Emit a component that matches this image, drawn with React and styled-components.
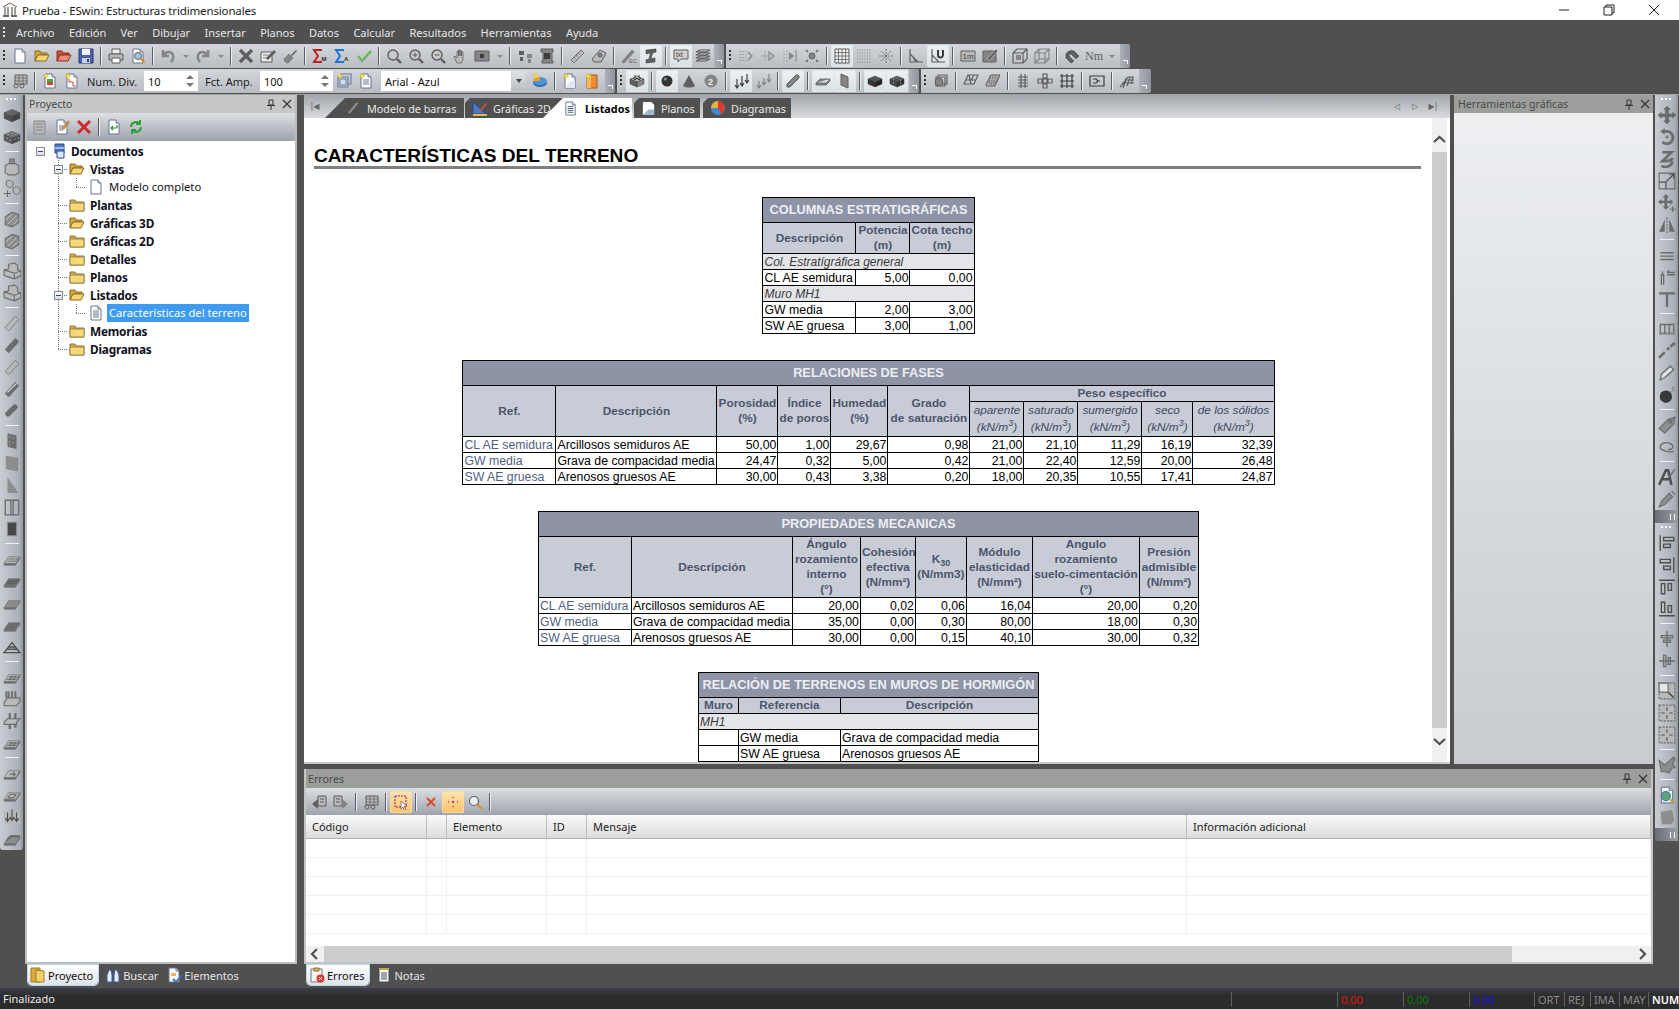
import React from 'react';
import styled, { createGlobalStyle } from 'styled-components';

const UI_FONT = '"Noto Sans", "DejaVu Sans", sans-serif';
const DOC_FONT = '"Liberation Sans", Arial, sans-serif';

const Global = createGlobalStyle`
  html, body { margin: 0; padding: 0; background: #505050; }
  body { width: 1679px; height: 1009px; overflow: hidden; font-family: ${UI_FONT}; }
  * { box-sizing: border-box; }
`;

/* ---------- icons ---------- */
const d = '#3c3c3c', s = '#5f5f5f', m = '#858585', l = '#b9b9b9', w = '#e9e9e9';

const block = (top, side, front) => (
  <>
    <path d="M1 6l7-3 7 3-7 3z" fill={top} stroke={d} strokeWidth=".5" />
    <path d="M1 6v5l7 3V9z" fill={front} stroke={d} strokeWidth=".5" />
    <path d="M15 6v5l-7 3V9z" fill={side} stroke={d} strokeWidth=".5" />
  </>
);
const plate = (fill, extra) => (
  <>
    <path d="M1 12l4-6h10l-4 6z" fill={fill} stroke={s} strokeWidth=".6" />
    <path d="M1 12v1.5h10V12M11 13.5L15 7.5V6" fill={s} stroke={s} strokeWidth=".6" />
    {extra}
  </>
);
const bar = (fill) => <path d="M2 12L11 2l3 3-9 10z" fill={fill} stroke={s} strokeWidth=".7" />;
const sheet = (extra) => (
  <>
    <path d="M3 1h7l3 3v11H3z" fill="#fff" stroke="#66758f" />
    <path d="M10 1v3h3" fill="#d9e2f0" stroke="#66758f" />
    {extra}
  </>
);
const spark = <path d="M4 0l1 2 2 1-2 1-1 2-1-2-2-1 2-1z" fill="#f2e25a" stroke="#d8b020" strokeWidth=".4" />;
const lens = (extra) => (
  <>
    <circle cx="7" cy="7" r="5" fill="#c9c9c9" stroke={s} strokeWidth="1.4" />
    <path d="M11 11l4 4" stroke={s} strokeWidth="2.4" />
    {extra}
  </>
);
const lines = (c, dd) => <path d={dd} fill="none" stroke={c} strokeWidth="1.2" />;

const ICONS = {
  app: (
    <>
      <path d="M1 5l7-4 7 4" fill="none" stroke="#8a5a50" />
      <path d="M3 5v8M6 5v8M10 5v8M13 5v8" stroke="#6a6a6a" strokeWidth="1.3" />
      <path d="M1 14h6M9 14h6" stroke="#3c3c3c" strokeWidth="1.4" />
    </>
  ),
  doc: sheet(),
  docLines: sheet(<path d="M5 6h6M5 8h6M5 10h6M5 12h6" stroke="#66758f" />),
  open: (
    <>
      <path d="M1 13V3h5l1 2h6v2H4z" fill="#d8a63a" stroke="#8a6a20" />
      <path d="M1 13l3-6h11l-3 6z" fill="#f4d676" stroke="#8a6a20" />
    </>
  ),
  openRed: (
    <>
      <path d="M1 13V3h5l1 2h6v2H4z" fill="#c8503a" stroke="#8a3020" />
      <path d="M1 13l3-6h11l-3 6z" fill="#ee8a70" stroke="#8a3020" />
    </>
  ),
  folder: (
    <>
      <path d="M1 3h5l1 2h8v9H1z" fill="#d6a840" stroke="#8f7a40" />
      <path d="M1 6h14v8H1z" fill="#f7d97a" stroke="#9b8545" />
    </>
  ),
  save: (
    <>
      <path d="M1 1h14v14H1z" fill="#4a5fb0" stroke="#2c3a78" />
      <path d="M4 1h8v6H4z" fill="#f3f3f3" />
      <path d="M4 10h8v5H4z" fill="#c6cce2" />
      <path d="M9 11h2v3H9z" fill="#2c3a78" />
    </>
  ),
  print: (
    <>
      <path d="M4 1h8v5H4z" fill="#eee" stroke={s} />
      <path d="M1 6h14v6H1z" fill={l} stroke={s} />
      <path d="M4 10h8v5H4z" fill="#fff" stroke={s} />
    </>
  ),
  preview: (
    <>
      {sheet()}
      <circle cx="8" cy="8" r="3.5" fill="#9fc7de" stroke={s} />
      <path d="M10.5 10.5l4 4" stroke="#d89020" strokeWidth="2" />
    </>
  ),
  undo: <path d="M3 2v6h6M3.5 8C5 4 9 3 11.5 5s2.5 6-.5 9" fill="none" stroke={m} strokeWidth="2.6" />,
  redo: <path d="M13 2v6H7M12.5 8C11 4 7 3 4.5 5S2 11 5 14" fill="none" stroke={m} strokeWidth="2.6" />,
  ex: <path d="M2 2l12 12M14 2L2 14" stroke={s} strokeWidth="3.4" />,
  red: <path d="M2 2l12 12M14 2L2 14" stroke="#d22a2a" strokeWidth="3" />,
  redSm: <path d="M4 4l8 8M12 4l-8 8" stroke="#e04a2a" strokeWidth="2" />,
  edit: (
    <>
      <path d="M1 4h11v10H1z" fill={w} stroke={s} />
      <path d="M3 7h6M3 10h5" stroke={m} />
      <path d="M6 10l8-8 2 2-8 8z" fill={s} />
    </>
  ),
  brush: (
    <>
      <path d="M9 7l5-5 1 1-5 5z" fill={s} />
      <path d="M2 11l5-5 4 4-5 5c-2 0-4-2-4-4z" fill={m} stroke={s} strokeWidth=".6" />
    </>
  ),
  sumM: (
    <>
      <path d="M10 2H2l4 6-4 6h8" fill="none" stroke="#c02020" strokeWidth="2" />
      <text x="9.5" y="12.5" fontSize="6" fontWeight="700" fill="#333" fontFamily={DOC_FONT}>M</text>
    </>
  ),
  sumA: (
    <>
      <path d="M10 2H2l4 6-4 6h8" fill="none" stroke="#1878d8" strokeWidth="2" />
      <text x="10" y="12.5" fontSize="6" fontWeight="700" fill="#333" fontFamily={DOC_FONT}>A</text>
    </>
  ),
  check: <path d="M2 8l4 5 9-10" fill="none" stroke="#66b85a" strokeWidth="2.4" />,
  zoom: lens(),
  zoomIn: lens(<path d="M4.5 7h5M7 4.5v5" stroke={s} />),
  zoomOut: lens(<path d="M4.5 7h5" stroke={s} />),
  zoomColor: (
    <>
      <circle cx="7" cy="7" r="4.5" fill="#e8f2f8" stroke={s} strokeWidth="1.2" />
      <path d="M10.5 10.5l4 4" stroke="#d89020" strokeWidth="2.2" />
    </>
  ),
  hand: <path d="M5 15L2 9l1-1 2 2V3h1.5v5V2h1.5v6V2.5h1.5V8V4H11v7l-1.5 4z" fill={l} stroke={s} strokeWidth=".8" />,
  box: (
    <>
      <path d="M1 3h14v10H1z" fill={m} stroke={s} />
      <path d="M6 6h4v4H6z" fill={d} />
    </>
  ),
  feet: (
    <>
      <path d="M2 3h5v4H2zM3 9h3v4H3z" fill={s} />
      <path d="M10 6h5v4h-5zM11 11h3v4h-3z" fill={m} />
    </>
  ),
  film: (
    <>
      <path d="M2 1h12v3h-1v9h1v2H3v-2h1V4H2z" fill={m} stroke={s} />
      <path d="M5 5h6v6H5z" fill={d} />
    </>
  ),
  ruler: <path d="M2 12L12 2l3 3L5 15zM5 9l1.5 1.5M7 7l1.5 1.5M9 5l1.5 1.5" fill={l} stroke={s} strokeWidth=".8" />,
  gear: (
    <>
      <path d="M3 14l-2-3 8-9 6 3-2 4-3 5z" fill={l} stroke={s} />
      <circle cx="9" cy="7" r="2" fill={m} stroke={s} />
    </>
  ),
  pencilEC: (
    <>
      <path d="M1 14L11 2l2 2L3 15z" fill={m} stroke={s} strokeWidth=".6" />
      <text x="8" y="15" fontSize="6" fill={s} fontFamily={DOC_FONT}>EC</text>
    </>
  ),
  beam: <path d="M3 2l10-1v3L9.5 5 8 11l4-1v4L3 15v-3l3-1 1.5-6L3 6z" fill={s} stroke={d} strokeWidth=".6" />,
  txt: (
    <>
      <path d="M1 2h14v9H8l-3 3v-3H1z" fill="#cfcfcf" stroke={s} />
      <text x="3" y="9" fontSize="6.4" fill={d} fontFamily={DOC_FONT}>txt</text>
    </>
  ),
  layers: lines(s, 'M1 4l4-2h10l-4 2zM1 7l4-2h10l-4 2zM1 10l4-2h10l-4 2zM1 13l4-2h10l-4 2z'),
  snapA: (
    <>
      <path d="M2 3v1M2 6v1M2 9v1M2 12v1M5 3v1M5 6v1M5 9v1M5 12v1M8 3v1M8 6v1M8 9v1M8 12v1" stroke={m} />
      <path d="M10 4l4 4-4 4" fill="none" stroke={m} strokeWidth="1.4" />
    </>
  ),
  snapB: (
    <>
      <path d="M1 8h8M5 3v10" stroke={m} strokeDasharray="1 1" />
      <path d="M9 4l5 4-5 4z" fill="none" stroke={m} strokeWidth="1.2" />
    </>
  ),
  snapC: (
    <>
      <path d="M2 3v1M2 6v1M2 9v1M2 12v1M5 3v1M5 6v1M5 9v1M5 12v1M14 2v12" stroke={m} />
      <path d="M7 4l5 4-5 4z" fill={m} />
    </>
  ),
  snapD: (
    <>
      <circle cx="8" cy="8" r="3" fill={m} stroke={s} />
      <path d="M2 2l2 2M14 2l-2 2M2 14l2-2M14 14l-2-2" stroke={s} strokeWidth="1.4" />
    </>
  ),
  grid: (
    <>
      <path d="M1 1h14v14H1z" fill="#eee" stroke={s} />
      <path d="M1 4.5h14M1 8h14M1 11.5h14M4.5 1v14M8 1v14M11.5 1v14" stroke={s} strokeWidth=".8" />
    </>
  ),
  dots: <path d="M1 2h14M1 5h14M1 8h14M1 11h14M1 14h14" stroke={m} strokeDasharray="1 1.5" />,
  burst: <path d="M8 1v14M1 8h14M3 3l10 10M13 3L3 13" stroke={s} strokeWidth=".8" strokeDasharray="2 1" />,
  angle: lines(s, 'M2 1v13h13M2 6l8 8M5 11h2v3'),
  angleU: (
    <>
      {lines(s, 'M2 1v13h13M2 7l7 7')}
      <path d="M8 2v5a2.5 2.5 0 0 0 5 0V2" fill="none" stroke={d} strokeWidth="2" />
    </>
  ),
  oneM: (
    <>
      <path d="M1 3h14v10H1z" fill={l} stroke={s} />
      <text x="2.5" y="11" fontSize="8" fill={d} fontFamily={DOC_FONT}>1m</text>
    </>
  ),
  note: (
    <>
      <path d="M1 3h13v11H1z" fill={m} stroke={s} />
      <path d="M5 11L14 1l2 2-9 10z" fill={s} stroke="#eee" strokeWidth=".5" />
    </>
  ),
  cubeSolid: (
    <>
      {lines(s, 'M1 5h10v10H1zM1 5l4-4h10v10l-4 4M11 5l4-4')}
      <path d="M4 7h5v5H4z" fill={m} />
    </>
  ),
  cubeWire: lines(m, 'M1 5h10v10H1zM1 5l4-4h10v10l-4 4M11 5l4-4M5 1v10h10M1 15l4-4'),
  magnet: <path d="M2 6a6 5 0 0 1 8-3l5 5-3 3-5-5a1.800 1.800 0 0 0-2 2l5 5-3 2-5-5z" fill={s} stroke={d} strokeWidth=".5" />,
  table: (
    <>
      <path d="M3 2h12v9H3z" fill={l} stroke={s} />
      <path d="M3 5h12M3 8h12M7 2v9M11 2v9" stroke={s} strokeWidth=".7" />
      <circle cx="4" cy="13" r="2" fill="none" stroke={s} />
      <circle cx="10" cy="13" r="2" fill="none" stroke={s} />
    </>
  ),
  docHeat: (
    <>
      {sheet(<path d="M5 6h6v3H5z" fill="#32b050" />)}
      <path d="M5 9h6v3H5z" fill="#e04020" />
      {spark}
    </>
  ),
  docChart: (
    <>
      {sheet(<path d="M5 6v3h4v4h3" fill="none" stroke="#d04030" />)}
      {spark}
    </>
  ),
  docCube: (
    <>
      {lines('#6c7f9e', 'M2 4h10v10H2zM5 1h10v10H12M5 1v3')}
      <path d="M4 6h6v6H4z" fill="#cfe0ee" stroke="#6c7f9e" />
      {spark}
    </>
  ),
  docNote: (
    <>
      {sheet(<path d="M5 7h6M5 9h6M5 11h6" stroke="#66758f" />)}
      {spark}
    </>
  ),
  pie: (
    <>
      <ellipse cx="8" cy="10" rx="7" ry="4" fill="#2d6db0" />
      <ellipse cx="8" cy="8" rx="7" ry="4" fill="#4d94d8" />
      <path d="M8 8V4a7 4 0 0 0-7 4z" fill="#f0a020" />
      {spark}
    </>
  ),
  docNew: (
    <>
      {sheet(<path d="M8 8h5v7H3z" fill="#dfe6f2" />)}
      {spark}
    </>
  ),
  docOrange: (
    <>
      <path d="M3 2h10v13H3z" fill="#ee8a30" stroke="#a05a18" />
      <path d="M3 2h4v13H3z" fill="#f8b85a" />
      {spark}
    </>
  ),
  bars3d: (
    <>
      {block(l, m, s)}
      <path d="M6 2v5M10 2v5M4 5l2 2 2-2M8 5l2 2 2-2" fill="none" stroke={d} />
    </>
  ),
  ball: (
    <>
      <circle cx="8" cy="8" r="5.5" fill="#333" />
      <circle cx="6.300" cy="6" r="1.600" fill="#8a8a8a" />
    </>
  ),
  cone: <path d="M8 2l6 11c-3 2-9 2-12 0z" fill={s} />,
  num2: (
    <>
      <circle cx="8" cy="8" r="6.500" fill={m} />
      <text x="5" y="11.500" fontSize="9" fontWeight="700" fill="#eee" fontFamily={DOC_FONT}>2</text>
    </>
  ),
  arrowsUp: lines(d, 'M4 6v9M2 12l2 3 2-3M9 3v10M7 10l2 3 2-3M14 1v9M12 7l2 3 2-3'),
  arrowsUp2: lines(m, 'M4 8v7M2 12l2 3 2-3M9 5v7M7 9l2 3 2-3M14 1v8M12 6l2 3 2-3'),
  pencil: <path d="M2 14v-3L11 2h2l1 1v2l-9 9z" fill={m} stroke={s} />,
  plateFlat: <path d="M1 10l4-4h10v2l-4 4H1zM1 10h10l4-4M11 10v2" fill={m} stroke={s} strokeWidth=".8" />,
  wallUp: <path d="M4 1l7 3v11l-7-3z" fill={m} stroke={s} />,
  cubeDark: block('#555', '#222', '#333'),
  cubeSpeck: (
    <>
      {block('#555', '#333', '#444')}
      <path d="M4 6h1M8 5h1M11 7h1M4 10h1M11 10h1" stroke={l} />
    </>
  ),
  cubeBalls: (
    <>
      {lines(s, 'M5 2h9v9H5zM3 4h9v9H3z')}
      <circle cx="6" cy="9" r="4" fill={m} stroke={s} />
    </>
  ),
  diamond: lines(s, 'M1 11l4-9h10l-4 9zM1 11h10M6 2l2 9M3 7h10M8 7l3-5'),
  mesh: (
    <>
      <path d="M1 11l5-9h9l-5 11H1z" fill={l} stroke={s} />
      <path d="M3 8h10M5 5h9M2 10h9M5 2l-1 11M8 2l-2 11M11 2l-3 11M14 3l-5 10" stroke={s} strokeWidth=".5" />
    </>
  ),
  hash: lines(s, 'M6 1v14M10 1v14M3 4h10M3 7h10M3 10h10M3 13h10'),
  nodes: lines(s, 'M6 1h4v4H6zM6 11h4v4H6zM1 6h4v4H1zM6 6h4v4H6zM11 6h4v4h-4zM8 5v1M8 10v1M5 8h1M10 8h1'),
  grid2: lines(d, 'M1 3h14M1 8h14M1 13h14M3 1v14M8 1v14M13 1v14'),
  section: lines(d, 'M1 3h14v10H1zM4 6h3l2 2h2M4 10h3l2-2'),
  hatch: lines(s, 'M1 14l4-4h10M3 11l4-4h8M6 7l3-3h6M4 15l3-8M8 13l3-9M12 11l2-7'),
  blockDark: block('#555', '#2e2e2e', '#3d3d3d'),
  blockSpeck: (
    <>
      {block('#666', '#3a3a3a', '#4a4a4a')}
      <path d="M4 6h1M8 5h1M11 6h1M3 9h1M6 11h1M10 10h1M13 9h1" stroke={l} />
    </>
  ),
  foot: (
    <>
      <path d="M6 1h4v5H6z" fill={m} stroke={s} />
      <path d="M2 7l3-2h6l3 2v6l-3 2H5l-3-2z" fill={l} stroke={s} />
    </>
  ),
  footPlus: (
    <>
      <path d="M3 1l3-1 3 2v3L6 7 3 5zM9 7l3-1 3 2v3l-3 2-3-2z" fill={l} stroke={s} strokeWidth=".8" />
      <path d="M4 9v6M1 12h6" stroke={s} />
    </>
  ),
  hatchBlock: (
    <>
      <path d="M2 13V6l6-4 6 2v7l-6 4z" fill={m} stroke={s} />
      <path d="M2 9l6-5M4 13l8-8M9 13l5-5" stroke={w} strokeWidth=".6" />
    </>
  ),
  stepBlock: (
    <>
      <path d="M5 2l5-1 3 2v4l3 1v4l-6 3-9-3V7l4-1z" fill={l} stroke={s} />
      <path d="M1 7l9 3 6-2M10 10v5" stroke={s} fill="none" />
    </>
  ),
  bar1: bar(l),
  barDark: bar(s),
  barBig: (
    <>
      {bar(s)}
      <path d="M4 11L12 3" stroke={w} />
    </>
  ),
  barRound: <path d="M3 9l6-6c2-2 5 1 3 3l-6 6c-2 2-5-1-3-3z" fill={s} stroke={d} strokeWidth=".5" />,
  column: (
    <>
      <path d="M4 1l8 2v12l-8-2z" fill={s} />
      <path d="M6 4v1M9 5v1M6 8v1M9 9v1M6 11v1" stroke={l} />
    </>
  ),
  wall: <path d="M3 2l10 2v11L3 13z" fill={m} stroke={m} />,
  tri: <path d="M4 1l9 13v1H4z" fill={m} />,
  wall2: lines(s, 'M2 2h12v13H2zM7 2v13M9 2v13'),
  colDark: <path d="M4 2h8v12H4z" fill="#333" stroke={m} />,
  plateGrid: plate(l, <path d="M5 11l3-4M7.500 11l3-4M10 11l3-4M3 10h10M4 8h10" stroke={s} strokeWidth=".5" />),
  plateDark: plate(s, <path d="M3 10h9M4 8h10" stroke={d} strokeWidth=".5" />),
  plateLight: plate(m),
  plateFlatDark: plate(s),
  roof: lines(d, 'M1 13L8 4l7 9H1zM3 10h10M5 8h6'),
  plateMesh: plate(l, <path d="M3 10h9M5 8h9M6 11l2-4M9 11l2-4" stroke={d} strokeWidth=".7" />),
  pile: (
    <>
      <path d="M5 1v6M11 1v6M3 1v6M8 1v6" stroke={s} strokeWidth="1.6" />
      <path d="M1 11l3-4h11v3l-3 4H1z" fill={l} stroke={s} />
    </>
  ),
  pile2: (
    <>
      <path d="M6 1v14M11 1v13" stroke={s} strokeWidth="2" />
      <path d="M1 9l3-3h11l-3 3v2l-11 0z" fill={l} stroke={s} />
    </>
  ),
  plateArrow: plate(l, <path d="M6 9h5M9 7l2 2-2 2" stroke={s} fill="none" />),
  plateFrame: plate(l, <path d="M4.500 10.500l2-3h5l-2 3z" fill="none" stroke={s} />),
  arrowsDown: (
    <>
      <path d="M1 3h14v11H1z" fill={l} />
      <path d="M4 4v7M2 9l2 3 2-3M8 1v9M6 8l2 3 2-3M12 4v7M10 9l2 3 2-3" fill="none" stroke={d} />
    </>
  ),
  plateStack: plate(m, <path d="M3 10l4-4h8M4 8l3-3h8" fill="none" stroke={s} />),
  move: (
    <>
      <path d="M8 0l3 3H9.500v4H13V5.500l3 2.500-3 3V9.500H9.500V13H11l-3 3-3-3h1.500V9.500H3V11L0 8l3-2.500V7h3.500V3H5z" fill={s} stroke={d} strokeWidth=".3" />
    </>
  ),
  movePlus: (
    <>
      <path d="M7 0l3 3H8.300v3H11V4.500l2.500 2.500L11 9.500V8H8.300v3H10l-3 3-3-3h1.700V8H3v1.500L0 7l3-2.500V6h2.700V3H4z" fill={s} />
      <path d="M13 11v5M10.500 13.500H16" stroke={s} />
    </>
  ),
  rotL: (
    <>
      <path d="M5 3h3a5.500 5.500 0 1 1-4 9.500" fill="none" stroke={s} strokeWidth="2.4" />
      <path d="M6 0v6L2 3z" fill={s} />
      <path d="M6.500 8h3M8 6.500v3" stroke={s} />
    </>
  ),
  rotR: (
    <>
      <path d="M4 2h8L4 10c4 0 8 0 9-3M3 14c3 2 9 1 10-4" fill="none" stroke={s} strokeWidth="2.400" />
    </>
  ),
  scale: (
    <>
      <path d="M1 1h14v14H1z" fill="none" stroke={s} />
      <path d="M1 9h6v6M7 9l7-7M10 2h4v4" fill="none" stroke={d} />
    </>
  ),
  mirror: (
    <>
      <path d="M1 14L6 3v11zM15 14L10 3v11z" fill={s} />
      <path d="M8 1v14" stroke={s} strokeDasharray="2 1" />
    </>
  ),
  twoLines: <path d="M2 6h12M2 9h12M2 12h12" stroke={s} strokeWidth="1.3" />,
  arrowT: lines(s, 'M3 15V6h2V15M4 6V3M8 4h7M8 6h7M8 4l2-2'),
  tBar: (
    <>
      <path d="M1 2h14v2H9v11H7V4H1z" fill={s} />
    </>
  ),
  frame: (
    <>
      {lines(s, 'M2 3v10M14 3v10M2 4h12M2 12h12M6 4v8M10 4v8')}
      <path d="M1 12h3M7 12h3M12 12h3" stroke={m} strokeWidth="2" />
    </>
  ),
  dashLine: <path d="M1 14l5-5M8 7l2-2M11 4l4-3" stroke={s} strokeWidth="2.400" />,
  knife: <path d="M2 14l1-5 8-7 3 3-8 7z" fill={w} stroke={s} strokeWidth="1.200" />,
  bomb: (
    <>
      <circle cx="7" cy="9.500" r="5.500" fill="#222" />
      <path d="M11 6l2-2M13 1v2M15 4h-2M15 1l-2 2" stroke={m} />
    </>
  ),
  tag: <path d="M1 11l8-8 6-2-1 6-8 8zM10 4h2v2h-2z" fill={m} stroke={s} />,
  loop: lines(s, 'M14 12C9 13 2 11 2 8s5-5 9-3 2 6-2 5'),
  letterA: (
    <>
      <path d="M1 15L7 2h2l3 13M3.500 10h7" fill="none" stroke={d} strokeWidth="2.200" />
      <path d="M10 8l5-7" stroke={s} strokeWidth="1.400" />
    </>
  ),
  pen: <path d="M1 15l2-5 7-7 3 3-7 7zM12 1l3 3" fill={m} stroke={s} />,
  alignL: lines(d, 'M2 1v14M5 3h9v3H5zM5 9h6v3H5z'),
  alignR: lines(d, 'M14 1v14M2 3h9v3H2zM5 9h6v3H5z'),
  alignT: lines(d, 'M1 2h14M3 5h3v9H3zM9 5h3v6H9z'),
  alignB: lines(d, 'M1 14h14M3 2h3v9H3zM9 5h3v6H9z'),
  centerH: lines(s, 'M8 1v14M3 5h10v2H3zM5 9h6v2H5z'),
  centerV: lines(s, 'M1 8h14M5 3h2v10H5zM9 5h2v6H9z'),
  boxArrow: (
    <>
      <path d="M1 1h14v14H1z" fill={l} stroke={s} strokeDasharray="2 1" />
      <path d="M1 1h8v8H1z" fill="#eee" stroke={s} />
      <path d="M9 9l5 5" stroke={d} strokeWidth="1.400" />
    </>
  ),
  boxDots: (
    <>
      <path d="M1 1h14v14H1z" fill={l} stroke={s} strokeDasharray="2 1" />
      <path d="M8 3v3M8 10v3M3 8h3M10 8h3" stroke={d} />
    </>
  ),
  wing: <path d="M1 4l5 4 8-7 1 2-2 4 2 3-3 1-2 4-4-1-3 0z" fill={m} stroke={s} />,
  earth: (
    <>
      {sheet()}
      <circle cx="7" cy="9" r="4" fill="#4fa060" stroke="#2c6db0" />
      <path d="M11 12l3 3" stroke="#d89020" strokeWidth="2" />
    </>
  ),
  rock: <path d="M2 3l11-2 2 10-3 4H3z" fill={m} stroke={l} />,
  back: (
    <>
      <path d="M7 2h8v10H7z" fill={l} stroke={s} />
      <path d="M9 5h4M9 8h4" stroke={s} />
      <path d="M7 5L1 10l6 5z" fill={s} />
    </>
  ),
  forward: (
    <>
      <path d="M1 2h8v10H1z" fill={l} stroke={s} />
      <path d="M3 5h4M3 8h4" stroke={s} />
      <path d="M9 5l6 5-6 5z" fill={m} />
    </>
  ),
  pickBox: (
    <>
      <path d="M2 2h11v11H2z" fill="none" stroke="#8a1a90" strokeDasharray="2 1" />
      <path d="M8 7l6 5-3 .5 2 3-1.500 .5-2-3-1.500 2z" fill="#eee" stroke={s} strokeWidth=".7" />
    </>
  ),
  pickMove: <path d="M8 3v1M8 7v2M8 12v1M3 8h1M7 8h2M12 8h1" stroke="#c03070" strokeWidth="1.600" />,
  docs: (
    <>
      <path d="M3 1h9v9H3z" fill="#4b78c8" stroke="#2a4a90" />
      <path d="M3 5h9" stroke="#fff" />
      <path d="M5 8h7v7H5z" fill="#dfe8f6" stroke="#2a4a90" />
    </>
  ),
  refresh: <path d="M3 8a5 5 0 0 1 9-3M13 8a5 5 0 0 1-9 3M12 1v4H8M4 15v-4h4" fill="none" stroke="#2fa03a" strokeWidth="2" />,
  docGreen: sheet(<path d="M5 9h6M5 9l2-2M5 9l2 2M11 6v3" fill="none" stroke="#2c8a30" strokeWidth="1.200" />),
  gridDoc: (
    <>
      <path d="M2 2h11v13H2z" fill={l} stroke={m} />
      <path d="M4 5h7M4 8h7M4 11h7" stroke={m} />
    </>
  ),
  editDoc: (
    <>
      {sheet(<path d="M5 7h6M5 9h6M5 11h4" stroke="#66758f" />)}
      <path d="M8 9l6-7 1.500 1.500-6 7z" fill="#d89030" stroke="#8a5a18" strokeWidth=".4" />
    </>
  ),
  binoc: (
    <>
      <path d="M2 15V8l2-5h2l1 5v7zM9 15V8l1-5h2l2 5v7z" fill="#e9eef8" stroke="#3a5aa8" />
      <path d="M7 8h2" stroke="#3a5aa8" />
    </>
  ),
  elems: (
    <>
      {sheet(<path d="M5 6h5v3H5z" fill="#f0b060" />)}
      <path d="M7 12l3 3 6-7" fill="none" stroke="#3a6ac8" strokeWidth="1.800" />
    </>
  ),
  clipErr: (
    <>
      <path d="M2 2h11v13H2z" fill="#f5f5f5" stroke="#777" />
      <path d="M5 1h5v3H5z" fill="#d8b860" stroke="#8a7030" />
      <circle cx="11.500" cy="11.500" r="4" fill="#e03a2a" />
      <path d="M10 10l3 3M13 10l-3 3" stroke="#fff" />
    </>
  ),
  notes: (
    <>
      <path d="M3 2h10v13H3z" fill="#f7f7f2" stroke="#3a4a70" />
      <path d="M3 1h10v2H3z" fill="#c8a840" />
      <path d="M5 6h6M5 8h6M5 10h6M5 12h6" stroke="#555" />
    </>
  ),
  folderTall: (
    <>
      <path d="M1 1h9v14H1z" fill="#d8a838" stroke="#a07c20" />
      <path d="M6 3l8 1v11H6z" fill="#f2cf6a" stroke="#a07c20" />
    </>
  ),
  triSet: (
    <>
      <path d="M1 2v12h13z" fill="#4b78c8" stroke="#2a4a90" />
      <path d="M1 14h14v2H1z" fill="#e8b840" />
      <path d="M7 11l7-8 1 1-7 8z" fill="#d85a30" />
    </>
  ),
  diagrams: (
    <>
      <circle cx="8" cy="8" r="7" fill="#3f8ad0" />
      <path d="M8 8V1a7 7 0 0 0-7 7z" fill="#e8b23a" />
      <path d="M8 8V1a7 7 0 0 1 3 13z" fill="#e03a2a" />
    </>
  ),
  planos: (
    <>
      <path d="M2 1h9l3 3v11H2z" fill="#fff" />
      <path d="M8 9h6v6H2z" fill="#9fb4d4" />
    </>
  ),
  barTab: <path d="M2 14L12 2" stroke="#8a8a8a" strokeWidth="2.400" />,
  docTab: sheet(<path d="M5 6h6M5 8h6M5 10h6M5 12h6" stroke="#44526e" />),
};

const Icon = ({ k, size = 16 }) => (
  <svg width={size} height={size} viewBox="0 0 16 16" fill="none">
    {ICONS[k]}
  </svg>
);

/* ---------- title + menu ---------- */
const Page = styled.div`
  width: 1679px;
  height: 1009px;
  display: flex;
  flex-direction: column;
  background: #505050;
  overflow: hidden;
`;

const TitleBar = styled.div`
  height: 20px;
  background: #fff;
  display: flex;
  align-items: center;
  padding-left: 2px;
  color: #1a1a1a;
  font-size: 11.5px;
  letter-spacing: -0.15px;
`;

const TitleText = styled.span`
  margin-left: 4px;
`;

const WinButtons = styled.div`
  margin-left: auto;
  display: flex;
  align-items: center;
  gap: 29px;
  padding-right: 17px;
`;

const MenuBar = styled.div`
  height: 24px;
  display: flex;
  align-items: center;
  color: #e6e6e6;
  font-size: 11px;
`;

const MenuGrip = styled.span`
  width: 2px;
  height: 10px;
  margin: 0 11px 0 3px;
  background: repeating-linear-gradient(#ddd 0 2px, transparent 2px 4px);
`;

const MenuItem = styled.span`
  margin-right: 14.4px;
`;

/* ---------- toolbars ---------- */
const ToolRows = styled.div`
  border-bottom: 1px solid #a4a4a4;
  display: flex;
  flex-direction: column;
  gap: 1px;
  padding-bottom: 1px;
  height: 51px;
  flex: none;
`;

const ToolRow = styled.div`
  height: 24px;
  display: flex;
  gap: 2px;
`;

const Segment = styled.div`
  width: ${(p) => p.$w}px;
  height: 24px;
  display: flex;
  align-items: center;
  background: linear-gradient(#d3d6da, #b9bcc2);
  border-radius: 0 3px 3px 0;
  overflow: hidden;
  color: #1e1e1e;
  font-size: 11px;
`;

const Grip = styled.span`
  flex: none;
  width: 9px;
  height: 100%;
  position: relative;
  &::after {
    content: '';
    position: absolute;
    left: 3px;
    top: 6px;
    width: 2px;
    height: 11px;
    background: repeating-linear-gradient(#333 0 2px, transparent 2px 4px);
  }
`;

const EndCap = styled.span`
  margin-left: auto;
  flex: none;
  width: ${(p) => p.$w || 10}px;
  height: 100%;
  background: linear-gradient(90deg, #aeb2b8, #8e939b);
  position: relative;
  &::after {
    content: '';
    position: absolute;
    left: 3px;
    bottom: 4px;
    width: 4px;
    height: 3px;
    border-top: 1px solid #fff;
    border-right: 1px solid #fff;
  }
`;

const Tool = styled.span`
  flex: none;
  width: 22px;
  height: 22px;
  display: flex;
  align-items: center;
  justify-content: center;
  border-radius: 2px;
  font-family: "Liberation Serif", serif;
  font-size: 12px;
  color: #5f5f5f;
  ${(p) => p.$on === 'blue' && 'background: linear-gradient(#eef2f4, #d8dfe3); box-shadow: inset 0 0 0 1px #dfe8ec;'}
  ${(p) => p.$on === 'orange' && 'background: linear-gradient(#ffe6b0, #fcc266); box-shadow: inset 0 0 0 1px #f7dca8;'}
`;

const Sep = styled.span`
  flex: none;
  width: 8px;
  height: 18px;
  position: relative;
  &::after {
    content: '';
    position: absolute;
    left: 3px;
    top: 0;
    bottom: 0;
    width: 1px;
    background: #5a5f66;
    box-shadow: 1px 0 #eee;
  }
`;

const Drop = styled.span`
  flex: none;
  width: 13px;
  display: flex;
  justify-content: center;
  &::after {
    content: '';
    border-left: 3px solid transparent;
    border-right: 3px solid transparent;
    border-top: 3px solid #8a8a8a;
  }
`;

const ToolItems = ({ items }) =>
  items.split(' ').map((it, i) => {
    if (it === '|') return <Sep key={i} />;
    if (it === 'v') return <Drop key={i} />;
    if (it === 'Nm') return <Tool key={i}>Nm</Tool>;
    if (it[0] === '*') return <Tool key={i} $on="blue"><Icon k={it.slice(1)} /></Tool>;
    if (it[0] === '+') return <Tool key={i} $on="orange"><Icon k={it.slice(1)} /></Tool>;
    return <Tool key={i}><Icon k={it} /></Tool>;
  });

const ToolLabel = styled.span`
  flex: none;
  width: ${(p) => p.$w}px;
  margin-left: ${(p) => p.$ml}px;
  white-space: nowrap;
`;

const Field = styled.span`
  flex: none;
  width: ${(p) => p.$w}px;
  height: 20px;
  background: #fff;
  color: #111;
  display: flex;
  align-items: center;
  padding-left: 4px;
  position: relative;
  margin-left: ${(p) => p.$ml || 0}px;
  margin-right: ${(p) => p.$mr || 0}px;
`;

const Spin = styled.span`
  margin-left: auto;
  width: 16px;
  height: 100%;
  display: flex;
  flex-direction: column;
  align-items: center;
  justify-content: center;
  gap: 4px;
  &::before {
    content: '';
    border-left: 4px solid transparent;
    border-right: 4px solid transparent;
    border-bottom: 4px solid #777;
  }
  &::after {
    content: '';
    border-left: 4px solid transparent;
    border-right: 4px solid transparent;
    border-top: 4px solid #777;
  }
`;

const ComboBtn = styled.span`
  margin-left: auto;
  width: 15px;
  height: 100%;
  background: linear-gradient(#dfe1e4, #b9bdc3);
  display: flex;
  align-items: center;
  justify-content: center;
  &::after {
    content: '';
    border-left: 3px solid transparent;
    border-right: 3px solid transparent;
    border-top: 4px solid #444;
  }
`;

/* ---------- workspace ---------- */
const Workspace = styled.div`
  flex: 1;
  display: flex;
  min-height: 0;
`;

const Strip = styled.div`
  flex: none;
  width: 23px;
  display: flex;
  flex-direction: column;
  align-self: flex-start;
`;

const StripPart = styled.div`
  display: flex;
  flex-direction: column;
  align-items: center;
  background: linear-gradient(90deg, #c9cdd2, #aab0b8 85%, #8f959d);
  border-radius: 0 0 3px 3px;
`;

const StripGrip = styled.span`
  height: 9px;
  width: 12px;
  flex: none;
  background: repeating-linear-gradient(90deg, #fff 0 2px, transparent 2px 4px) 0 3px / 100% 2px no-repeat;
`;

const StripTool = styled.span`
  flex: none;
  height: 22px;
  display: flex;
  align-items: center;
  justify-content: center;
  opacity: 0.85;
`;

const StripSep = styled.span`
  flex: none;
  height: 8px;
  width: 14px;
  display: block;
  background: linear-gradient(#f2f2f2, #f2f2f2) 0 3px / 100% 1px no-repeat;
`;

const StripEnd = styled.span`
  flex: none;
  height: 13px;
  width: 100%;
  background: linear-gradient(90deg, #6a6d73, #9a9ea5);
  display: flex;
  justify-content: flex-end;
  align-items: center;
  padding-right: 3px;
  &::after {
    content: '';
    width: 3px;
    height: 6px;
    border-left: 1px solid #fff;
    border-right: 1px solid #fff;
  }
`;

const StripItems = ({ items }) =>
  items.split(' ').map((it, i) =>
    it === '|' ? (
      <StripSep key={i} />
    ) : (
      <StripTool key={i}>
        <Icon k={it} size={18} />
      </StripTool>
    )
  );

/* ---------- left panel + tree ---------- */
const LeftCol = styled.div`
  flex: none;
  width: 272px;
  margin-left: 2px;
  margin-right: 7px;
  display: flex;
  flex-direction: column;
`;

const DockPanel = styled.div`
  height: 869px;
  flex: none;
  display: flex;
  flex-direction: column;
  border: 2px solid #bcbcbc;
  border-top: 0;
  background: #fff;
`;

const PanelHead = styled.div`
  height: ${(p) => p.$h}px;
  flex: none;
  display: flex;
  align-items: center;
  padding: 0 3px 0 ${(p) => p.$pl || 2}px;
  font-size: 10.6px;
  color: #4a4a4a;
  background: ${(p) => (p.$on ? '#c6c8c8' : '#9c9e9c')};
`;

const HeadBtns = styled.div`
  margin-left: auto;
  display: flex;
  align-items: center;
  gap: 6px;
`;

const PanelTools = styled.div`
  height: ${(p) => p.$h}px;
  flex: none;
  display: flex;
  align-items: center;
  padding-left: ${(p) => p.$pl}px;
  background: linear-gradient(#dcdfe3, #9ea4ac);
`;

const Tree = styled.div`
  flex: 1;
  padding: 1px 0 0 4px;
  background: #fff;
`;

const TreeRow = styled.div`
  height: 18px;
  display: flex;
  align-items: center;
  font-size: 12px;
  color: #10101c;
`;

const Guide = styled.span`
  flex: none;
  width: 18px;
  height: 18px;
  position: relative;
  ${(p) =>
    (p.$g === 'pipe' || p.$g === 'tee') &&
    `&::before { content: ''; position: absolute; left: 9px; top: 0; bottom: 0; width: 1px;
      background: repeating-linear-gradient(#777 0 1px, transparent 1px 2px); }`}
  ${(p) =>
    p.$g === 'end' &&
    `&::before { content: ''; position: absolute; left: 9px; top: 0; height: 9px; width: 1px;
      background: repeating-linear-gradient(#777 0 1px, transparent 1px 2px); }`}
  ${(p) =>
    (p.$g === 'tee' || p.$g === 'end') &&
    `&::after { content: ''; position: absolute; left: 9px; top: 9px; width: 10px; height: 1px;
      background: repeating-linear-gradient(90deg, #777 0 1px, transparent 1px 2px); }`}
`;

const Expander = styled.span`
  position: absolute;
  z-index: 1;
  left: 5px;
  top: 5px;
  width: 9px;
  height: 9px;
  background: linear-gradient(#fff, #dcdcdc);
  border: 1px solid #8a8a8a;
  &::after {
    content: '';
    position: absolute;
    left: 1px;
    top: 3px;
    width: 5px;
    height: 1px;
    background: #2a4a90;
  }
`;

const TreeIcon = styled.span`
  flex: none;
  display: flex;
  margin-left: ${(p) => p.$ml}px;
  margin-right: ${(p) => p.$mr}px;
`;

const TreeLabel = styled.span`
  font-weight: ${(p) => (p.$bold ? 700 : 400)};
  font-size: ${(p) => (p.$bold ? 11.8 : 11.2)}px;
  letter-spacing: ${(p) => (p.$bold ? '-0.2px' : '0')};
  height: 18px;
  line-height: 18px;
  padding: 0 2px;
  margin-left: -2px;
  ${(p) => p.$sel && 'background: #3d9bf2; color: #fff;'}
`;

const TabBar = styled.div`
  height: 20px;
  margin-top: 1px;
  flex: none;
  display: flex;
  align-items: center;
  font-size: 11px;
  padding-left: ${(p) => p.$pl}px;
  color: #e6e6e6;
`;

const BottomTab = styled.span`
  display: flex;
  align-items: center;
  gap: 2px;
  height: 20px;
  padding: 0 5px 0 0;
  margin-right: 3px;
  ${(p) =>
    p.$on &&
    `background: linear-gradient(#fff, #dde3ea); color: #111; border-radius: 0 0 4px 4px;
     box-shadow: 0 0 0 1px #b9d9e6; padding-left: 2px; margin-right: 7px;`}
`;

/* ---------- centre ---------- */
const CenterCol = styled.div`
  flex: none;
  width: 1349px;
  margin-right: 2px;
  display: flex;
  flex-direction: column;
`;

const TopRow = styled.div`
  height: 669px;
  flex: none;
  display: flex;
  gap: 4px;
`;

const DocPanel = styled.div`
  width: 1146px;
  flex: none;
  display: flex;
  flex-direction: column;
  background: #fff;
  border-bottom: 2px solid #c9c9c9;
`;

const DocTabs = styled.div`
  height: 23px;
  flex: none;
  display: flex;
  align-items: flex-end;
  background: linear-gradient(#a3a7ad, #d9dbde);
  font-size: 10.8px;
  padding-left: 1px;
`;

const NavGlyph = styled.span`
  flex: none;
  align-self: center;
  width: ${(p) => p.$w}px;
  margin-left: ${(p) => (p.$push ? 'auto' : 0)};
  text-align: center;
  font-size: 8px;
  line-height: 12px;
  color: #666;
  font-family: "DejaVu Sans", sans-serif;
`;

const DocTab = styled.span`
  flex: none;
  width: ${(p) => p.$w}px;
  height: 20px;
  display: flex;
  align-items: center;
  padding-left: ${(p) => p.$pl}px;
  gap: ${(p) => p.$gap}px;
  margin-left: ${(p) => p.$ml || 0}px;
  background: ${(p) => (p.$on ? '#fff' : '#505050')};
  color: ${(p) => (p.$on ? '#000' : '#e8e8e8')};
  font-weight: ${(p) => (p.$on ? 700 : 400)};
  overflow: hidden;
  white-space: nowrap;
  clip-path: ${(p) =>
    p.$slant
      ? 'polygon(20px 0, 100% 0, 100% 100%, 0 100%)'
      : 'polygon(5px 0, 100% 0, 100% 100%, 0 100%, 0 5px)'};
`;

const DocBody = styled.div`
  flex: 1;
  min-height: 0;
  display: flex;
`;

const Sheet = styled.div`
  flex: 1;
  min-width: 0;
  overflow: hidden;
  padding: 0 10px 0 11px;
  font-family: ${DOC_FONT};
`;

const Heading = styled.h1`
  margin: 26px 1px 28px -1px;
  height: 25px;
  border-bottom: 3px solid #808080;
  font-size: 19.1px;
  line-height: 24px;
  font-weight: 700;
  color: #000;
`;

const Table = styled.table`
  border-collapse: collapse;
  table-layout: fixed;
  width: ${(p) => p.$w}px;
  margin: 0 auto ${(p) => p.$mb}px;
  font-size: 12.3px;
  line-height: 14px;
  color: #000;
  td, th {
    border: 1px solid #000;
    padding: 0 1px;
    overflow: hidden;
    white-space: nowrap;
  }
`;

const Col = styled.col`
  width: ${(p) => p.$w}px;
`;

const TitleCell = styled.th`
  height: 25px;
  background: #8e94a6;
  color: #eceef4;
  font-size: 12.8px;
  font-weight: 700;
  text-align: center;
`;

const HeadCell = styled.th`
  height: ${(p) => p.$h || 16}px;
  background: #c8ccd6;
  color: #4c556b;
  font-size: 11.8px;
  font-weight: 700;
  line-height: 15px;
  text-align: center;
  sub { font-size: 9px; line-height: 0; }
`;

const UnitCell = styled.th`
  height: 35px;
  background: #c8ccd6;
  color: #3f4a62;
  font-size: 11.8px;
  font-style: italic;
  font-weight: 400;
  line-height: 17px;
  text-align: center;
  sup { font-size: 9px; line-height: 0; }
`;

const Group = styled.td`
  height: 16px;
  background: #e4e5e8;
  color: #3a3a3a;
  font-style: italic;
  font-size: 12px;
`;

const Cell = styled.td`
  height: 16px;
  text-align: ${(p) => (p.$num ? 'right' : 'left')};
  color: ${(p) => (p.$ref ? '#4f5f80' : '#000')};
`;

const DocScroll = styled.div`
  flex: none;
  width: 15px;
  margin-right: 3px;
  display: flex;
  flex-direction: column;
  align-items: center;
  background: #f0f0f0;
`;

const ScrollEnd = styled.div`
  flex: none;
  height: 34px;
  width: 100%;
  display: flex;
  justify-content: center;
  align-items: ${(p) => p.$align};
  padding: ${(p) => p.$pad};
`;

const ScrollThumb = styled.div`
  flex: ${(p) => (p.$w ? 'none' : 1)};
  ${(p) => (p.$w ? `width: ${p.$w}px; height: 100%;` : 'width: 100%;')}
  background: #cdcdcd;
`;

const SidePanel = styled.div`
  flex: 1;
  display: flex;
  flex-direction: column;
  background: linear-gradient(#eef0f2, #c8cbcf);
`;

const BottomPanel = styled.div`
  height: 195px;
  margin-top: 5px;
  flex: none;
  display: flex;
  flex-direction: column;
  background: #fff;
  border: 2px solid #c4c4c4;
  border-top: 0;
`;

const ErrorGrid = styled.div`
  display: grid;
  grid-template-columns: 121px 20px 100px 40px 600px 1fr;
`;

const ErrorHead = styled.div`
  height: 24px;
  display: flex;
  align-items: center;
  padding-left: 6px;
  font-size: 11px;
  color: #222;
  background: linear-gradient(#fafafa, #dcdcdc);
  border-right: 1px solid #bdbdbd;
  border-bottom: 1px solid #b0b0b0;
`;

const ErrorCell = styled.div`
  height: 19px;
  border-right: 1px solid #f0f0f0;
  border-bottom: 1px solid #f0f0f0;
`;

const HScroll = styled.div`
  margin-top: auto;
  height: 16px;
  flex: none;
  display: flex;
  align-items: stretch;
  background: #f0f0f0;
`;

const HEnd = styled.span`
  flex: none;
  width: 18px;
  display: flex;
  align-items: center;
  justify-content: center;
  margin-left: ${(p) => (p.$right ? 'auto' : 0)};
`;

/* ---------- status ---------- */
const StatusBar = styled.div`
  height: 21px;
  flex: none;
  display: flex;
  align-items: flex-end;
  background: linear-gradient(#3b3f47 0, #2c2c2c 8px, #2b2b2b);
  color: #e6e6e6;
  font-size: 11px;
  padding: 0 0 2px 3px;
`;

const StatusLabel = styled.span`
  width: 1228px;
  flex: none;
  line-height: 16px;
`;

const StatusPane = styled.span`
  flex: none;
  width: ${(p) => p.$w}px;
  height: 15px;
  line-height: 15px;
  padding-left: 3px;
  border-left: 1px solid #606060;
  color: ${(p) => p.$c || '#8a8a8a'};
  font-weight: ${(p) => (p.$bold ? 600 : 400)};
`;

/* ---------- data ---------- */
const ROW1A = 'doc open openRed save | print preview | undo v redo v | ex edit brush | sumM sumA check | zoom zoomIn zoomOut hand box v | feet film | ruler gear | pencilEC *beam | *txt layers';
const ROW1B = 'snapA snapB snapC snapD | *grid dots burst | angle *angleU | oneM note | cubeSolid cubeWire | magnet Nm v';
const ROW2B = '*bars3d | *ball cone num2 | *arrowsUp arrowsUp2 | *pencil | *plateFlat *wallUp | *cubeDark *cubeSpeck';
const ROW2C = 'cubeBalls | diamond mesh | hash nodes grid2 | section | hatch';
const LEFT_TOOLS = 'blockDark blockSpeck | foot footPlus | hatchBlock hatchBlock | stepBlock stepBlock | bar1 barDark bar1 barBig barRound | column wall tri wall2 colDark | plateGrid plateDark plateLight plateFlatDark roof | plateMesh pile pile2 plateMesh | plateArrow plateFrame arrowsDown plateStack';
const RIGHT_A = 'move rotL rotR scale movePlus mirror | twoLines arrowT tBar | frame dashLine knife bomb | tag loop | letterA pen';
const RIGHT_B = 'alignL alignR alignT alignB | centerH centerV | boxArrow boxDots boxDots | wing | earth rock';

const SOILS_2 = [
  ['CL AE semidura', 'Arcillosos semiduros AE', '50,00', '1,00', '29,67', '0,98', '21,00', '21,10', '11,29', '16,19', '32,39'],
  ['GW media', 'Grava de compacidad media', '24,47', '0,32', '5,00', '0,42', '21,00', '22,40', '12,59', '20,00', '26,48'],
  ['SW AE gruesa', 'Arenosos gruesos AE', '30,00', '0,43', '3,38', '0,20', '18,00', '20,35', '10,55', '17,41', '24,87'],
];
const SOILS_3 = [
  ['CL AE semidura', 'Arcillosos semiduros AE', '20,00', '0,02', '0,06', '16,04', '20,00', '0,20'],
  ['GW media', 'Grava de compacidad media', '35,00', '0,00', '0,30', '80,00', '18,00', '0,30'],
  ['SW AE gruesa', 'Arenosos gruesos AE', '30,00', '0,00', '0,15', '40,10', '30,00', '0,32'],
];

const Cols = ({ list }) => (
  <colgroup>
    {list.map((v, i) => <Col key={i} $w={v} />)}
  </colgroup>
);

const SoilRows = ({ rows }) =>
  rows.map((r) => (
    <tr key={r[0]}>
      {r.map((c, i) => (
        <Cell key={i} $ref={i === 0} $num={i > 1}>{c}</Cell>
      ))}
    </tr>
  ));

const TREE = [
  { g: [], icon: 'docs', label: 'Documentos', lvl: 0, exp: true },
  { g: ['', 'tee'], icon: 'open', label: 'Vistas', lvl: 1, exp: true },
  { g: ['', 'pipe', 'end'], icon: 'doc', label: 'Modelo completo', lvl: 2 },
  { g: ['', 'tee'], icon: 'folder', label: 'Plantas', lvl: 1 },
  { g: ['', 'tee'], icon: 'open', label: 'Gráficas 3D', lvl: 1 },
  { g: ['', 'tee'], icon: 'folder', label: 'Gráficas 2D', lvl: 1 },
  { g: ['', 'tee'], icon: 'folder', label: 'Detalles', lvl: 1 },
  { g: ['', 'tee'], icon: 'folder', label: 'Planos', lvl: 1 },
  { g: ['', 'tee'], icon: 'open', label: 'Listados', lvl: 1, exp: true },
  { g: ['', 'pipe', 'end'], icon: 'docLines', label: 'Características del terreno', lvl: 2, sel: true },
  { g: ['', 'tee'], icon: 'folder', label: 'Memorias', lvl: 1 },
  { g: ['', 'end'], icon: 'folder', label: 'Diagramas', lvl: 1 },
];

const PinClose = () => (
  <HeadBtns>
    <svg width="10" height="11" viewBox="0 0 10 11" fill="none">
      <path d="M3 1h4v5H3zM1 6.500h8M5 7v4" stroke="#333" />
    </svg>
    <svg width="10" height="10" viewBox="0 0 10 10" fill="none">
      <path d="M1 1l8 8M9 1L1 9" stroke="#333" strokeWidth="1.200" />
    </svg>
  </HeadBtns>
);

const Chevron = ({ dir }) => {
  const paths = { up: 'M1 8l5.500-5L12 8', down: 'M1 4l5.500 5L12 4', left: 'M8 1L3 6l5 5', right: 'M4 1l5 5-5 5' };
  return (
    <svg width="13" height="12" viewBox="0 0 13 12" fill="none">
      <path d={paths[dir]} stroke="#505050" strokeWidth="2.200" />
    </svg>
  );
};

const TreeItem = ({ item }) => {
  const isRoot = item.lvl === 0;
  const iconMl = isRoot ? 3 : item.lvl === 1 ? 2 : 3;
  const iconMr = isRoot ? 3 : 5;
  return (
    <TreeRow>
      {isRoot ? (
        <Guide $g="">
          <Expander />
        </Guide>
      ) : (
        item.g.map((g, i) => (
          <Guide key={i} $g={g}>
            {item.exp && i === item.g.length - 1 && <Expander />}
          </Guide>
        ))
      )}
      <TreeIcon $ml={iconMl} $mr={iconMr}>
        <Icon k={item.icon} />
      </TreeIcon>
      <TreeLabel $bold={item.lvl < 2} $sel={item.sel}>{item.label}</TreeLabel>
    </TreeRow>
  );
};

export default function App() {
  return (
    <Page>
      <Global />
      <TitleBar>
        <Icon k="app" />
        <TitleText>Prueba - ESwin: Estructuras tridimensionales</TitleText>
        <WinButtons>
          <svg width="16" height="12" viewBox="0 0 16 12" fill="none"><path d="M3 6h10" stroke="#222" /></svg>
          <svg width="16" height="12" viewBox="0 0 16 12" fill="none"><path d="M3 3h8v8H3zM5 3V1h8v8h-2" stroke="#222" /></svg>
          <svg width="16" height="12" viewBox="0 0 16 12" fill="none"><path d="M3 1l10 10M13 1L3 11" stroke="#222" /></svg>
        </WinButtons>
      </TitleBar>

      <MenuBar>
        <MenuGrip />
        {['Archivo', 'Edición', 'Ver', 'Dibujar', 'Insertar', 'Planos', 'Datos', 'Calcular', 'Resultados', 'Herramientas', 'Ayuda'].map((m2) => (
          <MenuItem key={m2}>{m2}</MenuItem>
        ))}
      </MenuBar>

      <ToolRows>
        <ToolRow>
          <Segment $w={724}><Grip /><ToolItems items={ROW1A} /><EndCap /></Segment>
          <Segment $w={404}><Grip /><ToolItems items={ROW1B} /><EndCap /></Segment>
        </ToolRow>
        <ToolRow>
          <Segment $w={615}>
            <Grip />
            <ToolItems items="table | docHeat docChart" />
            <ToolLabel $w={57} $ml={4}>Num. Div.</ToolLabel>
            <Field $w={54}>10<Spin /></Field>
            <ToolLabel $w={55} $ml={7}>Fct. Amp.</ToolLabel>
            <Field $w={73}>100<Spin /></Field>
            <Tool><Icon k="docCube" /></Tool>
            <Tool><Icon k="docNote" /></Tool>
            <Field $w={145} $ml={4} $mr={3}>Arial - Azul<ComboBtn /></Field>
            <ToolItems items="pie | docNew docOrange" />
            <EndCap />
          </Segment>
          <Segment $w={302}><Grip /><ToolItems items={ROW2B} /><EndCap /></Segment>
          <Segment $w={230}><Grip /><ToolItems items={ROW2C} /><EndCap $w={12} /></Segment>
        </ToolRow>
      </ToolRows>

      <Workspace>
        <Strip>
          <StripPart>
            <StripGrip />
            <StripItems items={LEFT_TOOLS} />
          </StripPart>
        </Strip>

        <LeftCol>
          <DockPanel>
            <PanelHead $h={18} $on>Proyecto<PinClose /></PanelHead>
            <PanelTools $h={28} $pl={2}>
              <ToolItems items="gridDoc editDoc red | docGreen refresh" />
            </PanelTools>
            <Tree>
              {TREE.map((t) => <TreeItem key={t.label} item={t} />)}
            </Tree>
          </DockPanel>
          <TabBar $pl={3}>
            <BottomTab $on><Icon k="folderTall" />Proyecto</BottomTab>
            <BottomTab><Icon k="binoc" />Buscar</BottomTab>
            <BottomTab><Icon k="elems" />Elementos</BottomTab>
          </TabBar>
        </LeftCol>

        <CenterCol>
          <TopRow>
            <DocPanel>
              <DocTabs>
                <NavGlyph $w={20}>|◀</NavGlyph>
                <DocTab $w={139} $pl={22} $gap={6} $slant><Icon k="barTab" size={14} />Modelo de barras</DocTab>
                <DocTab $w={97} $pl={7} $gap={5} $ml={1}><Icon k="triSet" />Gráficas 2D</DocTab>
                <DocTab $w={89} $pl={20} $gap={7} $ml={-19} $on $slant><Icon k="docTab" size={15} />Listados</DocTab>
                <DocTab $w={66} $pl={7} $gap={5} $ml={2}><Icon k="planos" size={15} />Planos</DocTab>
                <DocTab $w={88} $pl={7} $gap={5} $ml={3}><Icon k="diagrams" />Diagramas</DocTab>
                <NavGlyph $w={18} $push>◁</NavGlyph>
                <NavGlyph $w={18}>▷</NavGlyph>
                <NavGlyph $w={18}>▶|</NavGlyph>
                <NavGlyph $w={8} />
              </DocTabs>
              <DocBody>
                <Sheet>
                  <Heading>CARACTERÍSTICAS DEL TERRENO</Heading>

                  <Table $w={211} $mb={26}>
                    <Cols list={[93, 54, 64]} />
                    <tbody>
                      <tr><TitleCell colSpan={3}>COLUMNAS ESTRATIGRÁFICAS</TitleCell></tr>
                      <tr>
                        <HeadCell $h={31}>Descripción</HeadCell>
                        <HeadCell>Potencia<br />(m)</HeadCell>
                        <HeadCell>Cota techo<br />(m)</HeadCell>
                      </tr>
                      <tr><Group colSpan={3}>Col. Estratígráfica general</Group></tr>
                      <tr><Cell>CL AE semidura</Cell><Cell $num>5,00</Cell><Cell $num>0,00</Cell></tr>
                      <tr><Group colSpan={3}>Muro MH1</Group></tr>
                      <tr><Cell>GW media</Cell><Cell $num>2,00</Cell><Cell $num>3,00</Cell></tr>
                      <tr><Cell>SW AE gruesa</Cell><Cell $num>3,00</Cell><Cell $num>1,00</Cell></tr>
                    </tbody>
                  </Table>

                  <Table $w={811} $mb={26}>
                    <Cols list={[93, 161, 61, 53, 57, 82, 54, 54, 64, 51, 81]} />
                    <tbody>
                      <tr><TitleCell colSpan={11}>RELACIONES DE FASES</TitleCell></tr>
                      <tr>
                        <HeadCell rowSpan={2}>Ref.</HeadCell>
                        <HeadCell rowSpan={2}>Descripción</HeadCell>
                        <HeadCell rowSpan={2}>Porosidad<br />(%)</HeadCell>
                        <HeadCell rowSpan={2}>Índice<br />de poros</HeadCell>
                        <HeadCell rowSpan={2}>Humedad<br />(%)</HeadCell>
                        <HeadCell rowSpan={2}>Grado<br />de saturación</HeadCell>
                        <HeadCell colSpan={5}>Peso específico</HeadCell>
                      </tr>
                      <tr>
                        {['aparente', 'saturado', 'sumergido', 'seco', 'de los sólidos'].map((t) => (
                          <UnitCell key={t}>{t}<br />(kN/m<sup>3</sup>)</UnitCell>
                        ))}
                      </tr>
                      <SoilRows rows={SOILS_2} />
                    </tbody>
                  </Table>

                  <Table $w={660} $mb={26}>
                    <Cols list={[93, 161, 68, 55, 51, 66, 107, 59]} />
                    <tbody>
                      <tr><TitleCell colSpan={8}>PROPIEDADES MECANICAS</TitleCell></tr>
                      <tr>
                        <HeadCell $h={61}>Ref.</HeadCell>
                        <HeadCell>Descripción</HeadCell>
                        <HeadCell>Ángulo<br />rozamiento<br />interno<br />(°)</HeadCell>
                        <HeadCell>Cohesión<br />efectiva<br />(N/mm²)</HeadCell>
                        <HeadCell>K<sub>30</sub><br />(N/mm3)</HeadCell>
                        <HeadCell>Módulo<br />elasticidad<br />(N/mm²)</HeadCell>
                        <HeadCell>Angulo<br />rozamiento<br />suelo-cimentación<br />(°)</HeadCell>
                        <HeadCell>Presión<br />admisible<br />(N/mm²)</HeadCell>
                      </tr>
                      <SoilRows rows={SOILS_3} />
                    </tbody>
                  </Table>

                  <Table $w={340} $mb={1}>
                    <Cols list={[40, 102, 198]} />
                    <tbody>
                      <tr><TitleCell colSpan={3}>RELACIÓN DE TERRENOS EN MUROS DE HORMIGÓN</TitleCell></tr>
                      <tr><HeadCell>Muro</HeadCell><HeadCell>Referencia</HeadCell><HeadCell>Descripción</HeadCell></tr>
                      <tr><Group colSpan={3}>MH1</Group></tr>
                      <tr><Cell /><Cell>GW media</Cell><Cell>Grava de compacidad media</Cell></tr>
                      <tr><Cell /><Cell>SW AE gruesa</Cell><Cell>Arenosos gruesos AE</Cell></tr>
                    </tbody>
                  </Table>
                </Sheet>
                <DocScroll>
                  <ScrollEnd $align="flex-end" $pad="0 0 6px"><Chevron dir="up" /></ScrollEnd>
                  <ScrollThumb />
                  <ScrollEnd $align="flex-start" $pad="7px 0 0"><Chevron dir="down" /></ScrollEnd>
                </DocScroll>
              </DocBody>
            </DocPanel>
            <SidePanel>
              <PanelHead $h={18} $pl={4}>Herramientas gráficas<PinClose /></PanelHead>
            </SidePanel>
          </TopRow>

          <BottomPanel>
            <PanelHead $h={19} $pl={2}>Errores<PinClose /></PanelHead>
            <PanelTools $h={27} $pl={2}>
              <ToolItems items="back forward | table | +pickBox | redSm +pickMove zoomColor |" />
            </PanelTools>
            <ErrorGrid>
              {['Código', '', 'Elemento', 'ID', 'Mensaje', 'Información adicional'].map((t, i) => (
                <ErrorHead key={i}>{t}</ErrorHead>
              ))}
              {Array.from({ length: 30 }).map((_, i) => <ErrorCell key={i} />)}
            </ErrorGrid>
            <HScroll>
              <HEnd><Chevron dir="left" /></HEnd>
              <ScrollThumb $w={1188} />
              <HEnd $right><Chevron dir="right" /></HEnd>
            </HScroll>
          </BottomPanel>
          <TabBar $pl={3}>
            <BottomTab $on><Icon k="clipErr" />Errores</BottomTab>
            <BottomTab><Icon k="notes" />Notas</BottomTab>
          </TabBar>
        </CenterCol>

        <Strip>
          <StripPart>
            <StripGrip />
            <StripItems items={RIGHT_A} />
            <StripEnd />
          </StripPart>
          <StripPart>
            <StripGrip />
            <StripItems items={RIGHT_B} />
            <StripEnd />
          </StripPart>
        </Strip>
      </Workspace>

      <StatusBar>
        <StatusLabel>Finalizado</StatusLabel>
        <StatusPane $w={106} />
        <StatusPane $w={66} $c="#e01010">0,00</StatusPane>
        <StatusPane $w={66} $c="#0a7a0a">0,00</StatusPane>
        <StatusPane $w={65} $c="#1414e0">0,00</StatusPane>
        <StatusPane $w={30}>ORT</StatusPane>
        <StatusPane $w={26}>REJ</StatusPane>
        <StatusPane $w={29}>IMA</StatusPane>
        <StatusPane $w={29}>MAY</StatusPane>
        <StatusPane $w={31} $c="#fff" $bold>NUM</StatusPane>
      </StatusBar>
    </Page>
  );
}
